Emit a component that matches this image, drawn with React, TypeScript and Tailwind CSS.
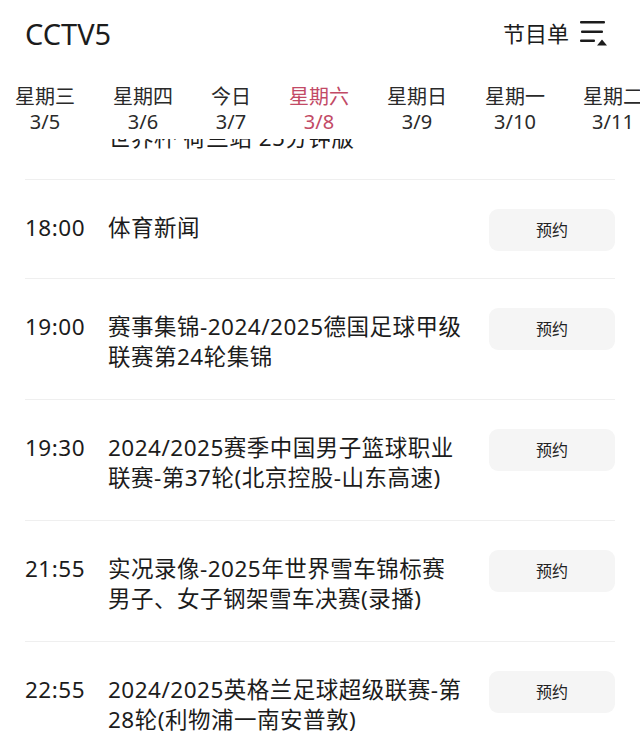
import React from "react";

const days = [
  { w: "星期三", d: "3/5" },
  { w: "星期四", d: "3/6" },
  { w: "今日", d: "3/7" },
  { w: "星期六", d: "3/8", active: true },
  { w: "星期日", d: "3/9" },
  { w: "星期一", d: "3/10" },
  { w: "星期二", d: "3/11" },
];

const rows = [
  { t: "18:00", lines: ["体育新闻"] },
  { t: "19:00", lines: ["赛事集锦-2024/2025德国足球甲级", "联赛第24轮集锦"] },
  { t: "19:30", lines: ["2024/2025赛季中国男子篮球职业", "联赛-第37轮(北京控股-山东高速)"] },
  { t: "21:55", lines: ["实况录像-2025年世界雪车锦标赛", "男子、女子钢架雪车决赛(录播)"] },
  { t: "22:55", lines: ["2024/2025英格兰足球超级联赛-第", "28轮(利物浦一南安普敦)"] },
];

const font = { fontFamily: '"Noto Sans", "Noto Sans CJK SC", sans-serif' };

export default function App() {
  return (
    <div className="w-[640px] h-[754px] overflow-hidden bg-white text-[#1c1c1c]" style={font}>
      <div className="h-[66px] flex items-center justify-between pl-[25px] pr-[32px]">
        <div className="text-[29px] leading-none">CCTV5</div>
        <div className="flex items-center gap-[9px]">
          <span className="text-[22px] leading-none">节目单</span>
          <svg width="30" height="30" viewBox="0 0 30 30" className="block">
            <rect x="2" y="3" width="25" height="2.6" rx="1" fill="#1c1c1c" />
            <rect x="3" y="12.5" width="22" height="2.6" rx="1" fill="#1c1c1c" />
            <rect x="2" y="21.5" width="15" height="2.6" rx="1" fill="#1c1c1c" />
            <path d="M19 27.5 L24 21.5 L29 27.5 Z" fill="#1c1c1c" />
          </svg>
        </div>
      </div>
      <div className="flex gap-[38px] pl-[15px] pt-[18px] pb-[4px] whitespace-nowrap">
        {days.map((x) => (
          <div
            key={x.w}
            className={`flex flex-col items-center shrink-0 ${x.active ? "text-[#c24a66]" : "text-[#2a2a2a]"}`}
          >
            <span className="text-[20px] leading-[25px]">{x.w}</span>
            <span className="text-[20px] leading-[26px]">{x.d}</span>
          </div>
        ))}
      </div>
      <div className="h-[40px] overflow-hidden">
        <div className="-mt-[16px] pl-[108px] text-[22.5px] tracking-[0.5px] leading-[30px] whitespace-nowrap">
          世界杯 荷兰站 25分钟版
        </div>
      </div>
      <div className="px-[25px]">
        {rows.map((r) => (
          <div key={r.t} className="border-t border-[#efefef] pt-[29px] pb-[27px] flex items-start">
            <div className="w-[83px] shrink-0 pt-[4px] text-[22.5px] tracking-[0.5px] leading-[30px]">{r.t}</div>
            <div className="flex-1 pt-[4px] text-[22.5px] tracking-[0.5px] leading-[30px] whitespace-nowrap">
              {r.lines.map((l) => (
                <div key={l}>{l}</div>
              ))}
            </div>
            <div className="w-[126px] h-[42px] shrink-0 rounded-[9px] bg-[#f5f5f5] flex items-center justify-center text-[16px] text-[#222]">
              预约
            </div>
          </div>
        ))}
      </div>
    </div>
  );
}
